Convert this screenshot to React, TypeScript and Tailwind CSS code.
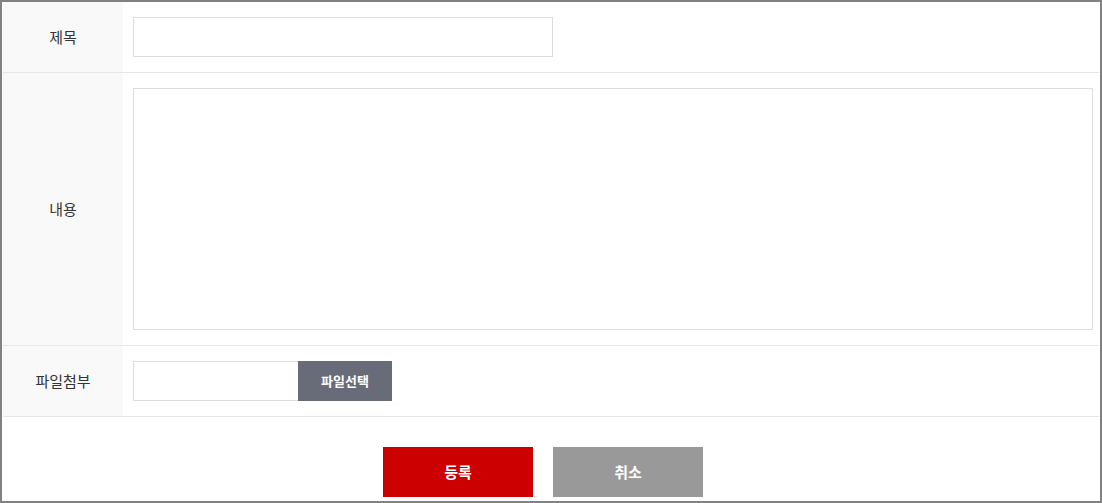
export default function App() {
  const font = { fontFamily: '"Noto Sans CJK KR", "Noto Sans", sans-serif' };
  return (
    <div
      className="w-[1102px] h-[503px] border-2 border-[#828282] bg-white overflow-hidden px-px"
      style={font}
    >
      <div className="flex flex-col">
        <div className="flex border-b border-[#e6e6e6] h-[71px]">
          <div className="w-[120px] shrink-0 bg-[#f9f9f9] flex items-center justify-center text-[15px] text-[#333]">
            제목
          </div>
          <div className="flex items-center pl-[10px]">
            <input type="text" className="w-[420px] h-[40px] border border-[#dcdcdc] bg-white outline-none px-2" />
          </div>
        </div>
        <div className="flex border-b border-[#e6e6e6] h-[273px]">
          <div className="w-[120px] shrink-0 bg-[#f9f9f9] flex items-center justify-center text-[15px] text-[#333]">
            내용
          </div>
          <div className="flex items-center pl-[10px]">
            <textarea className="w-[960px] h-[242px] border border-[#dcdcdc] bg-white outline-none resize-none p-2" />
          </div>
        </div>
        <div className="flex border-b border-[#e6e6e6] h-[71px]">
          <div className="w-[120px] shrink-0 bg-[#f9f9f9] flex items-center justify-center text-[15px] text-[#333]">
            파일첨부
          </div>
          <div className="flex items-center pl-[10px]">
            <input type="text" readOnly className="w-[165px] h-[40px] border border-[#dcdcdc] border-r-0 bg-white outline-none px-2" />
            <button className="w-[94px] h-[40px] bg-[#686c78] text-white text-[13px] font-bold">
              파일선택
            </button>
          </div>
        </div>
        <div className="flex justify-start pl-[380px] pt-[30px] gap-5">
          <button className="w-[150px] h-[50px] bg-[#cc0000] text-white text-[15px] font-bold">
            등록
          </button>
          <button className="w-[150px] h-[50px] bg-[#999999] text-white text-[15px] font-bold">
            취소
          </button>
        </div>
      </div>
    </div>
  );
}
